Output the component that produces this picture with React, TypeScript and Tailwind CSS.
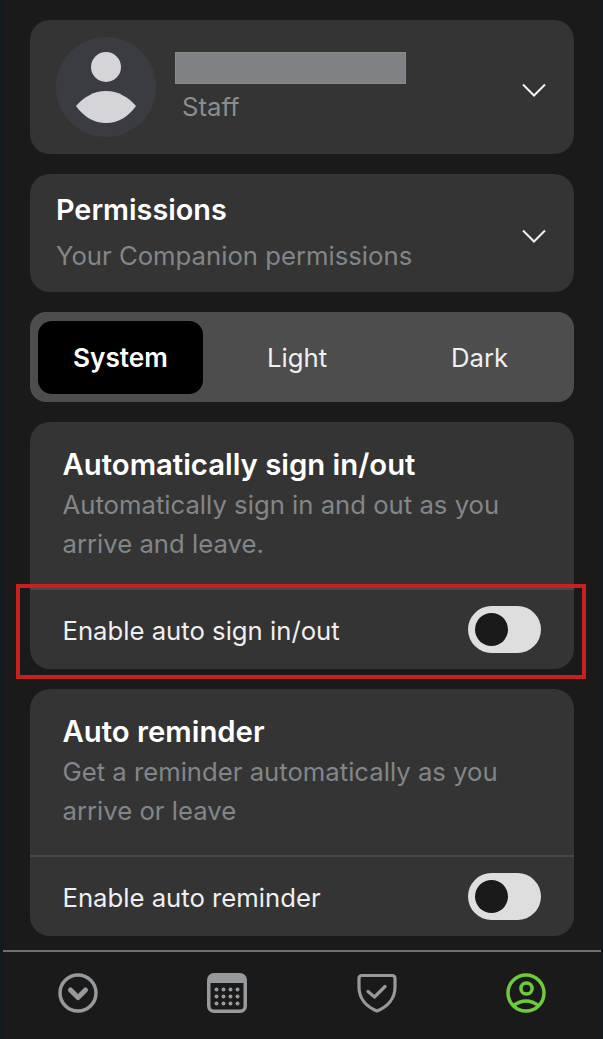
function Chevron() {
  return (
    <svg width="24" height="14" viewBox="0 0 24 14" fill="none" className="mt-[5px] shrink-0">
      <path d="M1 1.5 L12 12.5 L23 1.5" stroke="#f2f2f2" strokeWidth="2" />
    </svg>
  );
}

function Toggle() {
  return (
    <div className="flex h-[47px] w-[73px] items-center rounded-full bg-[#dedede] pl-[7px]">
      <div className="h-[33px] w-[33px] rounded-full bg-[#1a1a1a]" />
    </div>
  );
}

function SettingCard({ title, desc, label }: { title: string; desc: string; label: string }) {
  return (
    <section className="rounded-[20px] bg-[#343434]">
      <div className="h-[168px] border-b-2 border-[#484848] pt-[22.5px] pr-[33px] pl-[32.5px]">
        <h2 className="text-[29.3px] leading-[40px] font-semibold text-white">{title}</h2>
        <p className="text-[25.7px] leading-[39.5px] text-[#838688]">{desc}</p>
      </div>
      <div className="flex h-[79px] items-center justify-between pr-[33px] pl-[32.5px]">
        <span className="pt-[3px] text-[25.7px] text-[#efefef]">{label}</span>
        <Toggle />
      </div>
    </section>
  );
}

export default function App() {
  return (
    <main className="relative flex h-[1039px] w-[603px] flex-col overflow-hidden border-r-2 border-l-[3px] border-r-[#14191b] border-l-[#121a1d] bg-[#1a1a1a] font-['Inter','Liberation_Sans',sans-serif]">
      <div className="flex h-[950px] flex-col gap-5 px-[27px] pt-5">
        <section className="flex h-[134px] items-center rounded-[20px] bg-[#343434] pr-[28px] pl-[26px]">
          <svg width="100" height="100" viewBox="0 0 100 100" className="shrink-0">
            <circle cx="50" cy="50" r="50" fill="#3b3c42" />
            <circle cx="50" cy="30" r="15" fill="#d5d5d9" />
            <path d="M20 69 C28 60 38 54 50 54 C62 54 72 60 80 69 C72 80 62 86 50 86 C38 86 28 80 20 69Z" fill="#d5d5d9" />
          </svg>
          <div className="mt-[2px] ml-[19px] flex flex-1 flex-col">
            <div className="h-8 w-[231px] border border-[#88898b] bg-[#808184]" />
            <span className="mt-[5px] ml-[7px] text-[25.7px] leading-[36px] text-[#8b8e90]">Staff</span>
          </div>
          <Chevron />
        </section>

        <section className="flex h-[118px] items-center justify-between rounded-[20px] bg-[#343434] pr-[28px] pl-[26px]">
          <div>
            <h2 className="text-[28.8px] leading-[40px] font-semibold text-white">Permissions</h2>
            <p className="mt-[6px] text-[25.7px] leading-[40px] text-[#838688]">Your Companion permissions</p>
          </div>
          <Chevron />
        </section>

        <div className="flex h-[90px] items-center rounded-[16px] bg-[#4d4d4d] px-2 text-[25.7px]">
          <div className="flex h-[73px] w-[165px] shrink-0 items-center justify-center rounded-[14px] bg-black pt-[2px] text-[26.2px] font-semibold text-white">System</div>
          <div className="flex w-[188px] shrink-0 items-center justify-center pt-[2px] text-[#efefef]">Light</div>
          <div className="flex w-[177px] shrink-0 items-center justify-center pt-[2px] text-[#efefef]">Dark</div>
        </div>

        <SettingCard
          title="Automatically sign in/out"
          desc="Automatically sign in and out as you arrive and leave."
          label="Enable auto sign in/out"
        />
        <SettingCard
          title="Auto reminder"
          desc="Get a reminder automatically as you arrive or leave"
          label="Enable auto reminder"
        />
      </div>

      <nav className="grid flex-1 grid-cols-4 place-items-center border-t-2 border-[#707070] pb-[6px]">
        <svg width="40" height="40" viewBox="0 0 40 40" fill="none">
          <circle cx="20" cy="20" r="18" stroke="#969a9d" strokeWidth="3.5" />
          <path d="M12.5 17 L20 24.5 L27.5 17" stroke="#969a9d" strokeWidth="5" strokeLinecap="round" strokeLinejoin="round" />
        </svg>
        <svg width="40" height="40" viewBox="0 0 40 40" fill="none">
          <rect width="40" height="40" rx="7" fill="#969a9d" />
          <path d="M3.5 10 H36.5 V33 Q36.5 36.5 33 36.5 H7 Q3.5 36.5 3.5 33 Z" fill="#1a1a1a" />
          {[16.5, 23.5, 30.5].map((y) =>
            [9.5, 16.5, 23.5, 30.5].map((x) => <circle key={`${x}-${y}`} cx={x} cy={y} r="2" fill="#969a9d" />)
          )}
        </svg>
        <svg width="40" height="40" viewBox="0 0 40 40" fill="none">
          <path d="M5 2.5 H35 Q38 2.5 38 5.5 V14 C38 26 30 34 20 38 C10 34 2 26 2 14 V5.5 Q2 2.5 5 2.5Z" stroke="#969a9d" strokeWidth="3.2" strokeLinejoin="round" />
          <path d="M11 18.5 L17.5 24 L28 13.5" stroke="#969a9d" strokeWidth="3.2" strokeLinecap="round" strokeLinejoin="round" />
        </svg>
        <svg width="40" height="40" viewBox="0 0 40 40" fill="none">
          <circle cx="20" cy="20" r="18" stroke="#6ccb3a" strokeWidth="3.5" />
          <circle cx="20.5" cy="15.5" r="5.6" stroke="#6ccb3a" strokeWidth="3.5" />
          <path d="M7 33 Q20 23 33 33" stroke="#6ccb3a" strokeWidth="3.5" />
        </svg>
      </nav>

      <div className="absolute top-[584px] left-[13px] h-[95px] w-[570px] border-4 border-[#c91f1f]" />
    </main>
  );
}
